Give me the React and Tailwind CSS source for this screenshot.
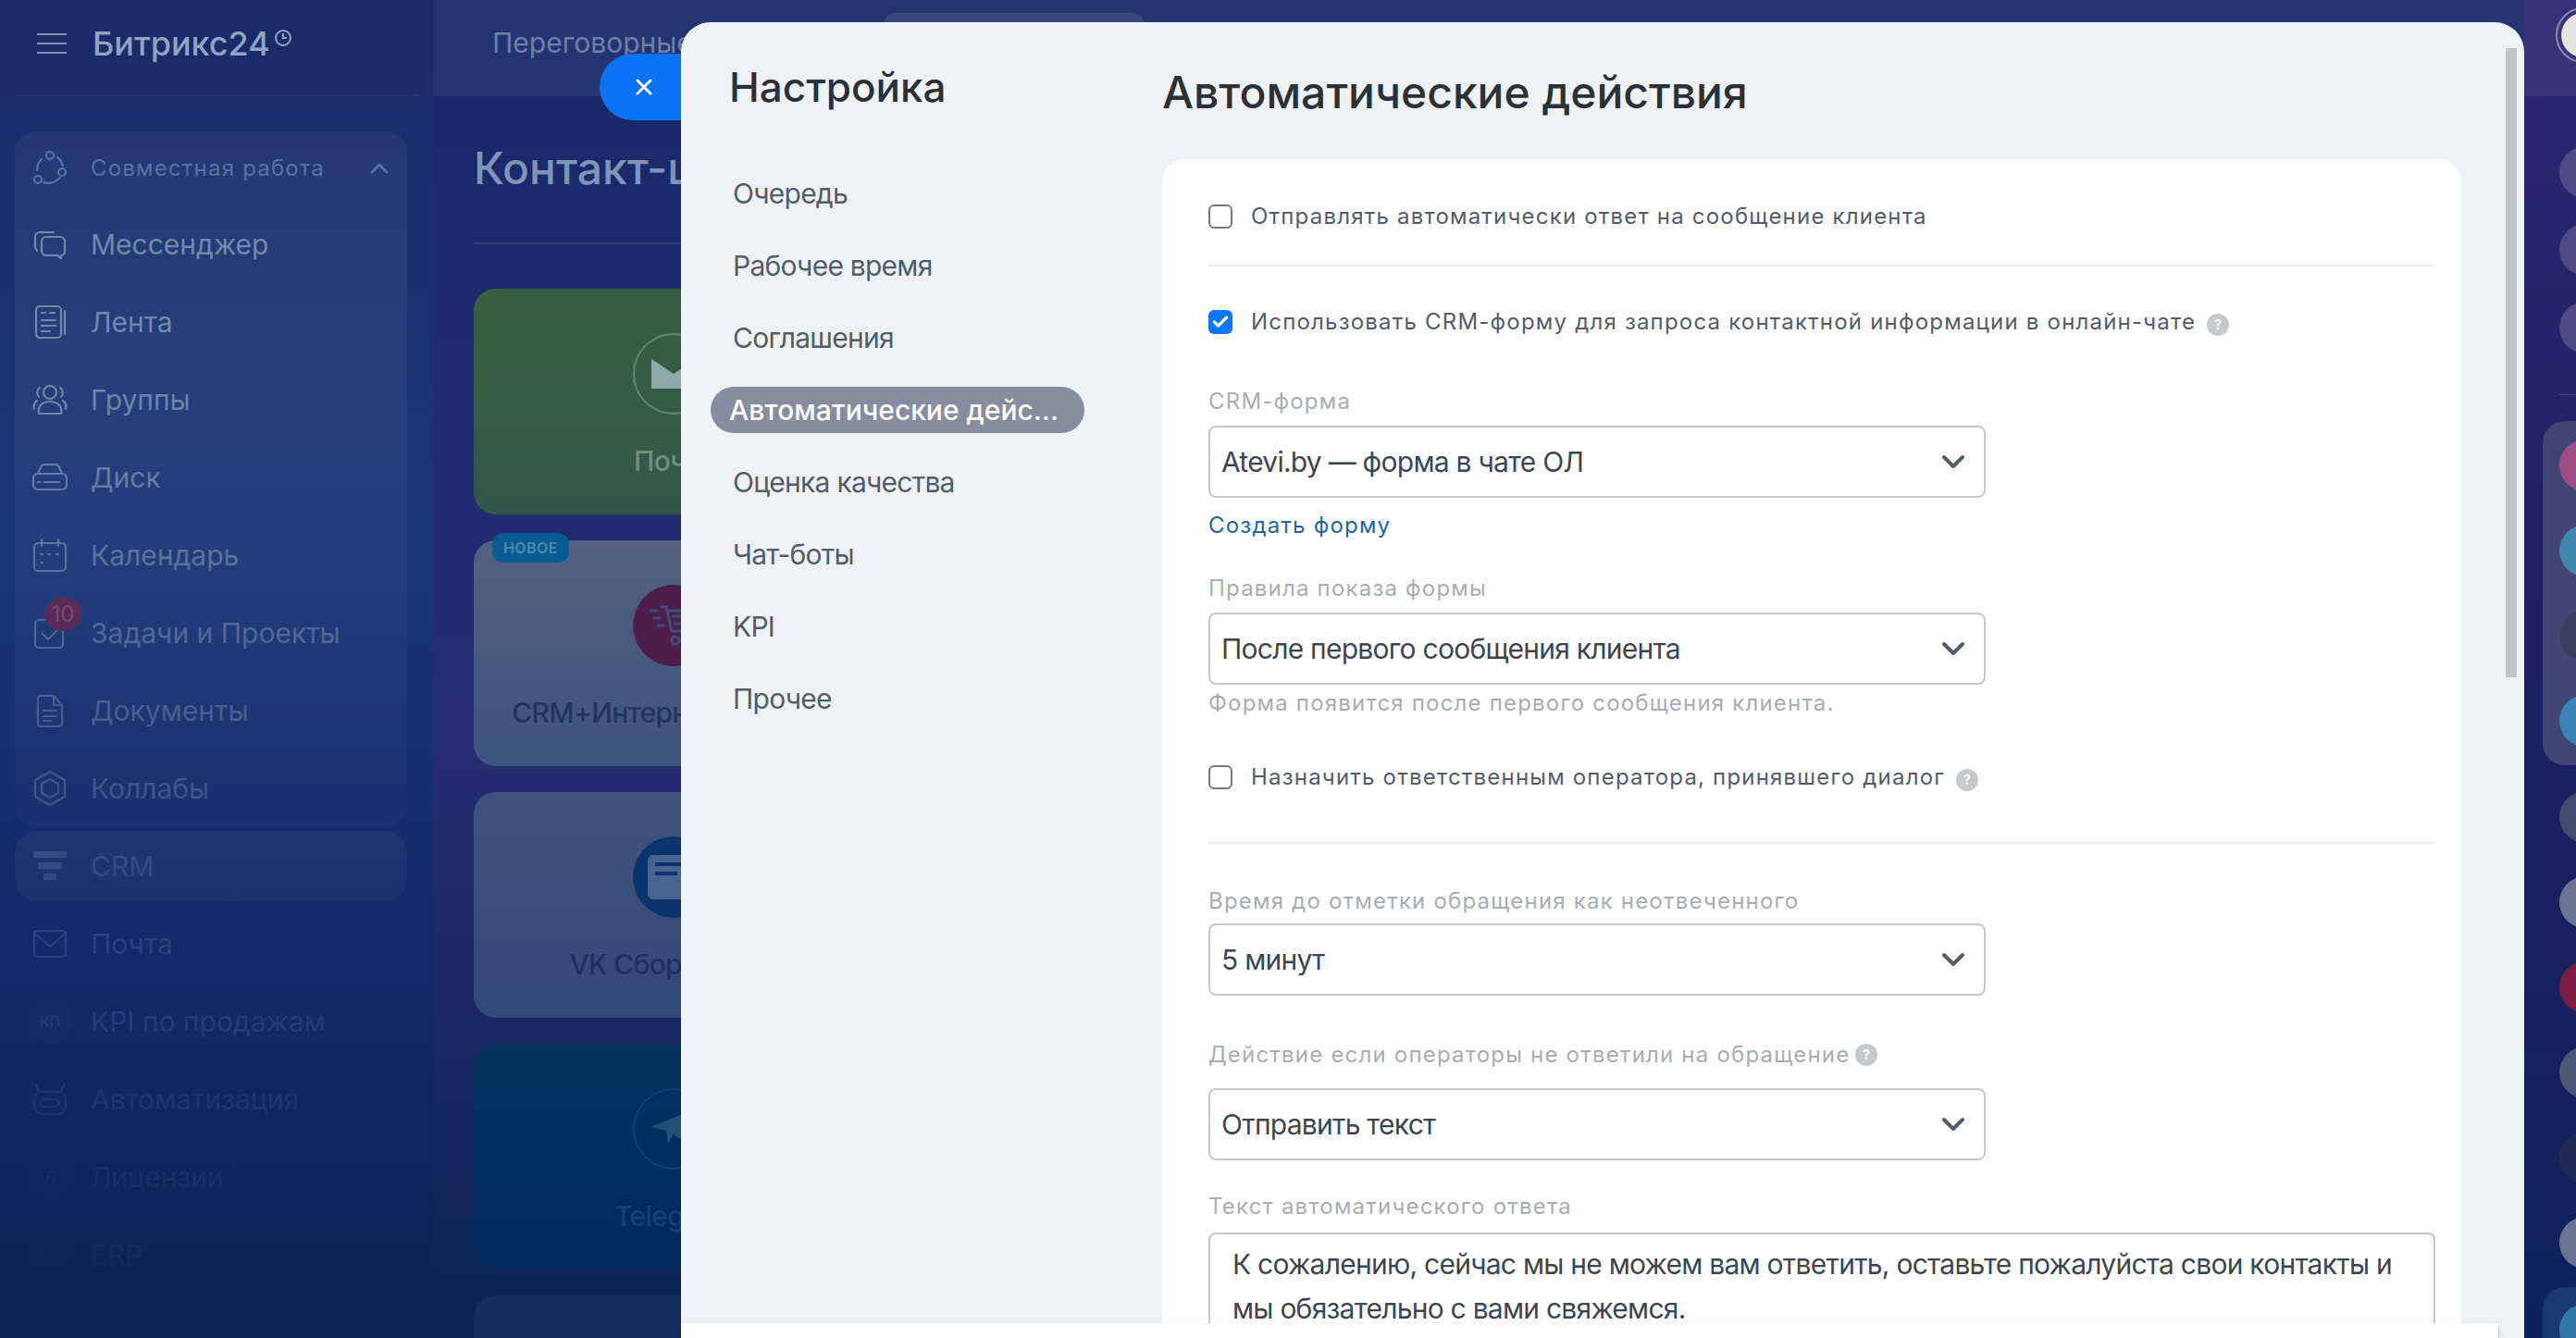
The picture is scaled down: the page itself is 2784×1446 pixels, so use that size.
import React from "react";
import { Check, ChevronUp, X } from "lucide-react";

// Иконки левого меню
const iconProps = {
  width: 40,
  height: 40,
  viewBox: "0 0 40 40",
  fill: "none",
  stroke: "currentColor",
  strokeWidth: 2.2,
  strokeLinecap: "round",
  strokeLinejoin: "round",
};

const icons = {
  chat: (
    <svg {...iconProps}>
      <path d="M24 7H9a5 5 0 0 0-5 5v11c0 2 1 3 2 4" />
      <path d="M16 12h15a5 5 0 0 1 5 5v11a4 4 0 0 1-4 4v3l-4-3H16a5 5 0 0 1-5-5V17a5 5 0 0 1 5-5z" />
    </svg>
  ),
  feed: (
    <svg {...iconProps}>
      <rect x="5" y="3" width="27" height="34" rx="4" />
      <path d="M36 8v25" />
      <path d="M11 10h4M20 10h5M11 18h15M11 24h15M11 30h9" />
    </svg>
  ),
  groups: (
    <svg {...iconProps}>
      <circle cx="20" cy="12" r="7" />
      <path d="M8 35c-2-9 5-13 12-13s14 4 12 13z" />
      <path d="M9 7c-3 2-4 7-1 10M31 7c3 2 4 7 1 10M3 30c-1-4 0-7 3-9M37 30c1-4 0-7-3-9" />
    </svg>
  ),
  disk: (
    <svg {...iconProps}>
      <rect x="2" y="16" width="36" height="17" rx="5" />
      <path d="M7 16l3-7c1-2 2-3 4-3h12c2 0 3 1 4 3l3 7" />
      <path d="M14 25h16M7 25h2" />
    </svg>
  ),
  calendar: (
    <svg {...iconProps}>
      <rect x="3" y="7" width="34" height="30" rx="4" />
      <path d="M11 3v7M29 3v7M10 19h2M18 19h2M27 19h2M10 28h2" />
    </svg>
  ),
  tasks: (
    <svg {...iconProps}>
      <rect x="4" y="6" width="30" height="30" rx="4" />
      <path d="M12 21l6 6 11-11" />
    </svg>
  ),
  doc: (
    <svg {...iconProps}>
      <path d="M10 4h14l9 10v20a3 3 0 0 1-3 3H10a3 3 0 0 1-3-3V7a3 3 0 0 1 3-3z" />
      <path d="M24 4v10h9M13 20h14M13 26h14M13 31h8" />
    </svg>
  ),
  collab: (
    <svg {...iconProps}>
      <path d="M20 2l16 9v18l-16 9-16-9V11z" />
      <path d="M20 10l9 5v10l-9 5-9-5V15z" />
    </svg>
  ),
  crm: (
    <svg width="40" height="40" viewBox="0 0 40 40" fill="currentColor">
      <rect x="2" y="4" width="36" height="7" rx="1" />
      <rect x="7" y="16" width="26" height="7" rx="1" />
      <rect x="13" y="28" width="14" height="7" rx="1" />
    </svg>
  ),
  mail: (
    <svg {...iconProps}>
      <rect x="3" y="6" width="34" height="28" rx="3" />
      <path d="M4 9l16 14L36 9" />
    </svg>
  ),
  kpi: (
    <div className="flex h-12 w-12 items-center justify-center rounded-full bg-white/5 text-base">
      КП
    </div>
  ),
  bot: (
    <svg {...iconProps}>
      <rect x="3" y="12" width="34" height="24" rx="8" />
      <path d="M8 12L5 4M32 12l3-8" />
      <rect x="10" y="20" width="20" height="8" rx="4" />
    </svg>
  ),
  license: (
    <div className="flex h-12 w-12 items-center justify-center rounded-full bg-white/5 text-base">
      Л
    </div>
  ),
  erp: (
    <div className="flex h-12 w-12 items-center justify-center rounded-full bg-white/5 text-base">
      i
    </div>
  ),
};

const topItems = [
  { label: "Мессенджер", icon: "chat" },
  { label: "Лента", icon: "feed" },
  { label: "Группы", icon: "groups" },
  { label: "Диск", icon: "disk" },
  { label: "Календарь", icon: "calendar" },
  { label: "Задачи и Проекты", icon: "tasks", badge: "10" },
  { label: "Документы", icon: "doc" },
  { label: "Коллабы", icon: "collab" },
];

const bottomItems = [
  { label: "CRM", icon: "crm", active: true },
  { label: "Почта", icon: "mail" },
  { label: "KPI по продажам", icon: "kpi" },
  { label: "Автоматизация", icon: "bot" },
  { label: "Лицензии", icon: "license" },
  { label: "ERP", icon: "erp" },
];

const modalNav = [
  "Очередь",
  "Рабочее время",
  "Соглашения",
  "Автоматические действия",
  "Оценка качества",
  "Чат-боты",
  "KPI",
  "Прочее",
];

function MenuRow({ item }) {
  return (
    <div
      className={`relative flex items-center gap-5 px-3.5 ${
        item.active ? "my-1 h-19 rounded-3xl bg-white/10" : "h-21"
      }`}
    >
      <div className="flex w-12 shrink-0 justify-center">{icons[item.icon]}</div>
      <span className="text-3xl">{item.label}</span>
      {item.badge && (
        <span className="absolute left-8 top-1 flex h-9 w-10 items-center justify-center rounded-full bg-[#7a2a4d] text-2xl text-[#a65a74]">
          {item.badge}
        </span>
      )}
    </div>
  );
}

function Sidebar() {
  return (
    <aside className="relative flex w-117 shrink-0 flex-col bg-linear-to-b from-[#1b2a69] via-[#1a3b79] via-45% to-[#0a2254] text-[#7089ae]">
      <div className="mx-4 flex h-26 shrink-0 items-center gap-7 border-b-2 border-white/5 pb-2 pl-6">
        <div className="flex w-8 flex-col gap-2">
          <span className="h-0.5 bg-[#7f94b6]" />
          <span className="h-0.5 bg-[#7f94b6]" />
          <span className="h-0.5 bg-[#7f94b6]" />
        </div>
        <div className="flex items-start gap-1 text-[#8fa3c2]">
          <span className="text-4xl font-medium">Битрикс24</span>
          <svg width="20" height="20" viewBox="0 0 20 20" fill="none" stroke="currentColor" strokeWidth="2" className="mt-1">
            <circle cx="10" cy="10" r="8" />
            <path d="M10 5v5h4" />
          </svg>
        </div>
      </div>

      <div className="mx-4 mt-9.5 w-106 rounded-3xl bg-white/5">
        <div className="flex h-20 items-center gap-5 px-3.5 text-[#55749f]">
          <svg {...iconProps} className="mx-1 shrink-0">
            <circle cx="20" cy="6" r="4" />
            <circle cx="7" cy="32" r="4" />
            <circle cx="33" cy="24" r="4" />
            <path d="M11 10c-3 3-5 7-5 12M28 8c3 2 5 6 6 9M13 35c6 2 12 1 18-5" />
          </svg>
          <span className="flex-1 text-2xl tracking-wider">Совместная работа</span>
          <ChevronUp size={32} />
        </div>
        {topItems.map((item) => (
          <MenuRow key={item.label} item={item} />
        ))}
      </div>

      <div className="mx-4 w-106">
        {bottomItems.map((item) => (
          <MenuRow key={item.label} item={item} />
        ))}
      </div>

      {/* затухание к низу */}
      <div className="pointer-events-none absolute inset-x-0 bottom-0 top-100 bg-linear-to-b from-transparent via-[#13296a]/75 via-60% to-[#0a2254]" />
    </aside>
  );
}

function ChannelCard({ title, badge, bg, text, circle, children }) {
  return (
    <div className={`relative flex h-61 w-108 shrink-0 flex-col items-center rounded-3xl pt-12 ${bg}`}>
      {badge && (
        <span className="absolute -top-2 left-5 rounded-xl bg-[#0a5a92] px-3 py-1 text-base font-semibold tracking-wide text-[#4d8ab5]">
          {badge}
        </span>
      )}
      <div className={`flex h-22 w-22 items-center justify-center rounded-full ${circle}`}>
        {children}
      </div>
      <span className={`mt-8 whitespace-nowrap text-3xl font-medium tracking-tight ${text}`}>{title}</span>
    </div>
  );
}

function MainArea() {
  return (
    <main className="flex min-w-0 flex-1 flex-col overflow-hidden bg-linear-to-b from-[#17296a] via-[#252e72] via-55% to-[#0a2254]">
      <div className="flex h-26 shrink-0 bg-white/5 pl-16">
        <span className="mt-7 w-106 shrink-0 text-3xl text-[#6d80a9]">Переговорные</span>
        <div className="mt-3.5 h-12 w-70 shrink-0 rounded-xl bg-white/10" />
      </div>
      <div className="flex flex-col px-11">
        <h1 className="mt-13.5 whitespace-nowrap text-5xl font-medium text-[#7f94b6]">Контакт-центр</h1>
        <div className="mt-14 h-0.5 w-full bg-white/10" />
        <div className="mt-12 flex flex-col gap-7">
          <ChannelCard title="Почта" bg="bg-linear-to-b from-[#37603f] to-[#32574a]" text="text-[#6f8f80]" circle="border-2 border-[#5b8a72]">
            <svg width="48" height="32" viewBox="0 0 48 32">
              <path d="M0 0l24 16L48 0v32H0z" fill="#8fa9a8" />
            </svg>
          </ChannelCard>
          <ChannelCard title="CRM+Интернет-магазин" badge="НОВОЕ" bg="bg-linear-to-b from-[#52617f] to-[#3d547e]" text="text-[#22345f]" circle="bg-[#4f1f4c]">
            <svg width="56" height="48" viewBox="0 0 56 48" fill="none" stroke="#3d4f7c" strokeWidth="3">
              <path d="M2 8h8M6 16h8M10 24h8M14 4h6l6 26h24l4-22H22M26 14h28M28 22h24" />
              <circle cx="30" cy="40" r="4" />
              <circle cx="46" cy="40" r="4" />
            </svg>
          </ChannelCard>
          <ChannelCard title="VK Сбор заявок" bg="bg-linear-to-b from-[#40537b] to-[#33487b]" text="text-[#1f3060]" circle="bg-[#0c346c]">
            <div className="flex h-12 w-14 flex-col gap-1.5 rounded-md bg-[#46648f] p-2">
              <span className="h-1 w-8 bg-[#0c346c]" />
              <span className="h-1 w-6 bg-[#0c346c]" />
            </div>
          </ChannelCard>
          <ChannelCard title="Telegram" bg="bg-linear-to-b from-[#04335f] to-[#01285f]" text="text-[#173f75]" circle="border-2 border-[#12406f]">
            <svg width="48" height="44" viewBox="0 0 48 44" fill="#235077">
              <path d="M0 20L48 0 40 40 24 28l-6 10-2-14z" />
            </svg>
          </ChannelCard>
          <div className="h-61 w-108 shrink-0 rounded-3xl bg-white/5" />
        </div>
      </div>
    </main>
  );
}

function Avatar({ color }) {
  return <div className={`h-14 w-14 shrink-0 rounded-full ${color}`} />;
}

function RightBar() {
  return (
    <div className="flex w-14 shrink-0 flex-col overflow-hidden bg-linear-to-b from-[#2f2771] via-[#1c2062] via-50% to-[#0c2259]">
      <div className="flex h-26 shrink-0 items-start bg-white/5 pl-8.5 pt-2">
        <div className="h-15 w-15 shrink-0 rounded-full border-2 border-[#8a8bb8] p-1">
          <div className="h-full w-full rounded-full bg-[#e5e5e0]" />
        </div>
      </div>
      <div className="mt-13.5 flex flex-col gap-7 pl-9.5">
        <Avatar color="bg-[#514a85]" />
        <Avatar color="bg-[#514a85]" />
        <Avatar color="bg-[#514a85]" />
      </div>
      <div className="ml-9.5 mt-11 h-px shrink-0 bg-white/15" />
      <div className="ml-5 mt-7 flex flex-col gap-9 rounded-l-3xl bg-[#424474] py-5 pl-4.5">
        <Avatar color="bg-[#a24c84]" />
        <Avatar color="bg-[#3f87ad]" />
        <Avatar color="bg-[#3b3f5d]" />
        <Avatar color="bg-[#3a85b8]" />
      </div>
      <div className="mt-7 flex flex-col gap-9 pl-9.5">
        <Avatar color="bg-[#444c6b]" />
        <Avatar color="bg-[#6b7593]" />
        <Avatar color="bg-[#7b1c40]" />
        <Avatar color="bg-[#4a5a72]" />
        <Avatar color="bg-[#202b55]" />
        <Avatar color="bg-[#6a7590]" />
      </div>
      <div className="ml-5 mt-5 rounded-tl-3xl bg-[#173a70] pl-4.5 pt-4.5">
        <Avatar color="bg-[#2e78a5]" />
      </div>
    </div>
  );
}

function Box({ checked }) {
  return checked ? (
    <span className="flex h-6.5 w-6.5 shrink-0 items-center justify-center rounded-md bg-[#0b76f7] text-white">
      <Check size={20} strokeWidth={4} />
    </span>
  ) : (
    <span className="h-6.5 w-6.5 shrink-0 rounded-md border-2 border-[#76797c] bg-white" />
  );
}

function Hint() {
  return (
    <span className="flex h-6 w-6 shrink-0 items-center justify-center rounded-full bg-[#c5c9cc] text-sm font-bold text-white">
      ?
    </span>
  );
}

function CheckRow({ checked, children, hint, className = "" }) {
  return (
    <div className={`flex h-8 items-center gap-5 ${className}`}>
      <Box checked={checked} />
      <span className="text-2xl tracking-wider text-[#535c69]">{children}</span>
      {hint && (
        <span className="-ml-2 mt-1.5">
          <Hint />
        </span>
      )}
    </div>
  );
}

function Label({ children, className = "" }) {
  return <div className={`flex h-8 items-center text-2xl tracking-wider text-[#a8adb2] ${className}`}>{children}</div>;
}

function SelectBox({ value }) {
  return (
    <div className="flex h-19.5 w-210 items-center justify-between rounded-lg border-2 border-[#c6c9cc] pl-3 pr-5 text-3xl tracking-tight text-[#3d4650]">
      <span>{value}</span>
      <svg width="26" height="16" viewBox="0 0 26 16" fill="none" stroke="#525c69" strokeWidth="4" strokeLinecap="round" strokeLinejoin="round">
        <path d="M3 3l10 10L23 3" />
      </svg>
    </div>
  );
}

function Modal() {
  return (
    <div className="absolute bottom-0 left-184 right-14 top-6">
      <button className="absolute right-full top-8.5 flex h-18 w-22 items-center rounded-l-full bg-[#0b72f5] pl-8.5 text-white">
        <X size={28} strokeWidth={2.5} />
      </button>
      <div className="flex h-full overflow-hidden rounded-t-4xl bg-[#eef2f4]">
        <div className="w-130 shrink-0 pl-8 pr-21">
          <h2 className="mb-16 ml-5 mt-11 text-[44px] leading-13 font-medium text-[#2c3138]">Настройка</h2>
          <nav className="flex flex-col gap-7">
            {modalNav.map((name, i) =>
              i === 3 ? (
                <div key={name} className="flex h-12.5 items-center rounded-full bg-[#868d9f] px-5 text-3xl font-medium text-white">
                  <span className="truncate">{name}</span>
                </div>
              ) : (
                <div key={name} className="flex h-12.5 items-center px-6 text-3xl tracking-tight text-[#535c69]">
                  {name}
                </div>
              )
            )}
          </nav>
        </div>

        <div className="min-w-0 flex-1 pr-17">
          <h1 className="mb-11 mt-12 text-5xl leading-14 font-medium text-[#2c3138]">Автоматические действия</h1>
          <div className="h-full rounded-3xl bg-white pl-12.5 pr-7 pt-11.5">
            <CheckRow>Отправлять автоматически ответ на сообщение клиента</CheckRow>
            <div className="mt-9 h-0.5 bg-[#eef0f1]" />
            <CheckRow checked hint className="mt-11">
              Использовать CRM-форму для запроса контактной информации в онлайн-чате
            </CheckRow>

            <Label className="mb-2.5 mt-13.5">CRM-форма</Label>
            <SelectBox value="Atevi.by — форма в чате ОЛ" />
            <div className="mt-3.5 flex h-8 items-center text-2xl tracking-wider text-[#1a66a8]">Создать форму</div>

            <Label className="mb-2.5 mt-9">Правила показа формы</Label>
            <SelectBox value="После первого сообщения клиента" />
            <Label className="mt-1">Форма появится после первого сообщения клиента.</Label>

            <CheckRow hint className="mt-12">
              Назначить ответственным оператора, принявшего диалог
            </CheckRow>
            <div className="mt-13.5 h-0.5 bg-[#eef0f1]" />

            <Label className="mb-2 mt-11.5">Время до отметки обращения как неотвеченного</Label>
            <SelectBox value="5 минут" />

            <Label className="mb-5 mt-12 gap-1.5">
              Действие если операторы не ответили на обращение
              <Hint />
            </Label>
            <SelectBox value="Отправить текст" />

            <Label className="mb-3 mt-8.5">Текст автоматического ответа</Label>
            <div className="h-40 rounded-lg border-2 border-[#c6c9cc] px-6 pt-2 text-3xl leading-12 tracking-tight text-[#3d4650]">
              К сожалению, сейчас мы не можем вам ответить, оставьте пожалуйста свои контакты и мы обязательно с вами свяжемся.
            </div>
          </div>
        </div>
      </div>

      {/* скроллбар и нижняя полоса */}
      <div className="absolute right-2 top-7 h-170 w-3 bg-[#bfc6c7]" />
      <div className="absolute bottom-0 left-0 right-7 h-4 bg-white shadow-md shadow-black/30" />
    </div>
  );
}

export default function App() {
  return (
    <div className="relative flex h-screen w-full overflow-hidden bg-[#0a2254] font-[Inter,sans-serif]">
      <Sidebar />
      <MainArea />
      <RightBar />
      <Modal />
    </div>
  );
}
